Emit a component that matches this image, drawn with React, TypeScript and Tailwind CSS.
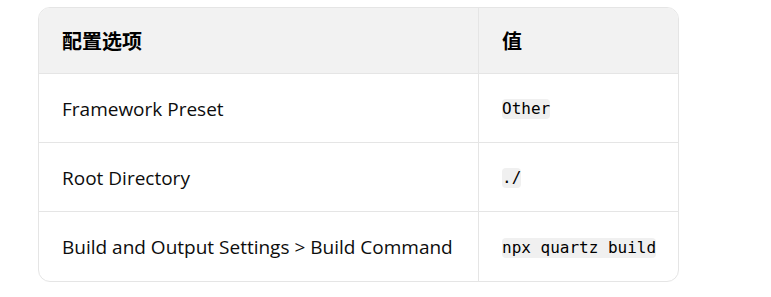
import React from "react";

const rows = [
  ["Framework Preset", "Other"],
  ["Root Directory", "./"],
  ["Build and Output Settings > Build Command", "npx quartz build"],
];

export default function App() {
  return (
    <div className="w-[771px] h-[297px] bg-white pt-[7px] pl-[38px]" style={{ fontFamily: '"Open Sans", "Noto Sans CJK SC", sans-serif' }}>
      <div className="w-[641px] border border-[#e5e5e5] rounded-[12px] overflow-hidden">
        <div className="flex h-[66px] bg-[#f2f2f2] border-b border-[#e5e5e5] text-[20px] font-bold text-black">
          <div className="w-[440px] border-r border-[#e5e5e5] flex items-center pl-[23px]" style={{ fontFamily: '"Noto Sans CJK SC", sans-serif' }}>配置选项</div>
          <div className="flex-1 flex items-center pl-[23px]" style={{ fontFamily: '"Noto Sans CJK SC", sans-serif' }}>值</div>
        </div>
        {rows.map(([a, b], i) => (
          <div key={i} className={`flex h-[69px] text-[19px] text-[#0d0d0d] ${i < rows.length - 1 ? "border-b border-[#e5e5e5]" : "h-[68px]"}`}>
            <div className="w-[440px] border-r border-[#e5e5e5] flex items-center pl-[23px] pt-[2px]">{a}</div>
            <div className="flex-1 flex items-center pl-[23px] pt-[2px]">
              <code className="bg-[#f0f0f0] rounded-[4px] text-[16px] text-black leading-[20px]" style={{ fontFamily: '"DejaVu Sans Mono", monospace' }}>{b}</code>
            </div>
          </div>
        ))}
      </div>
    </div>
  );
}
